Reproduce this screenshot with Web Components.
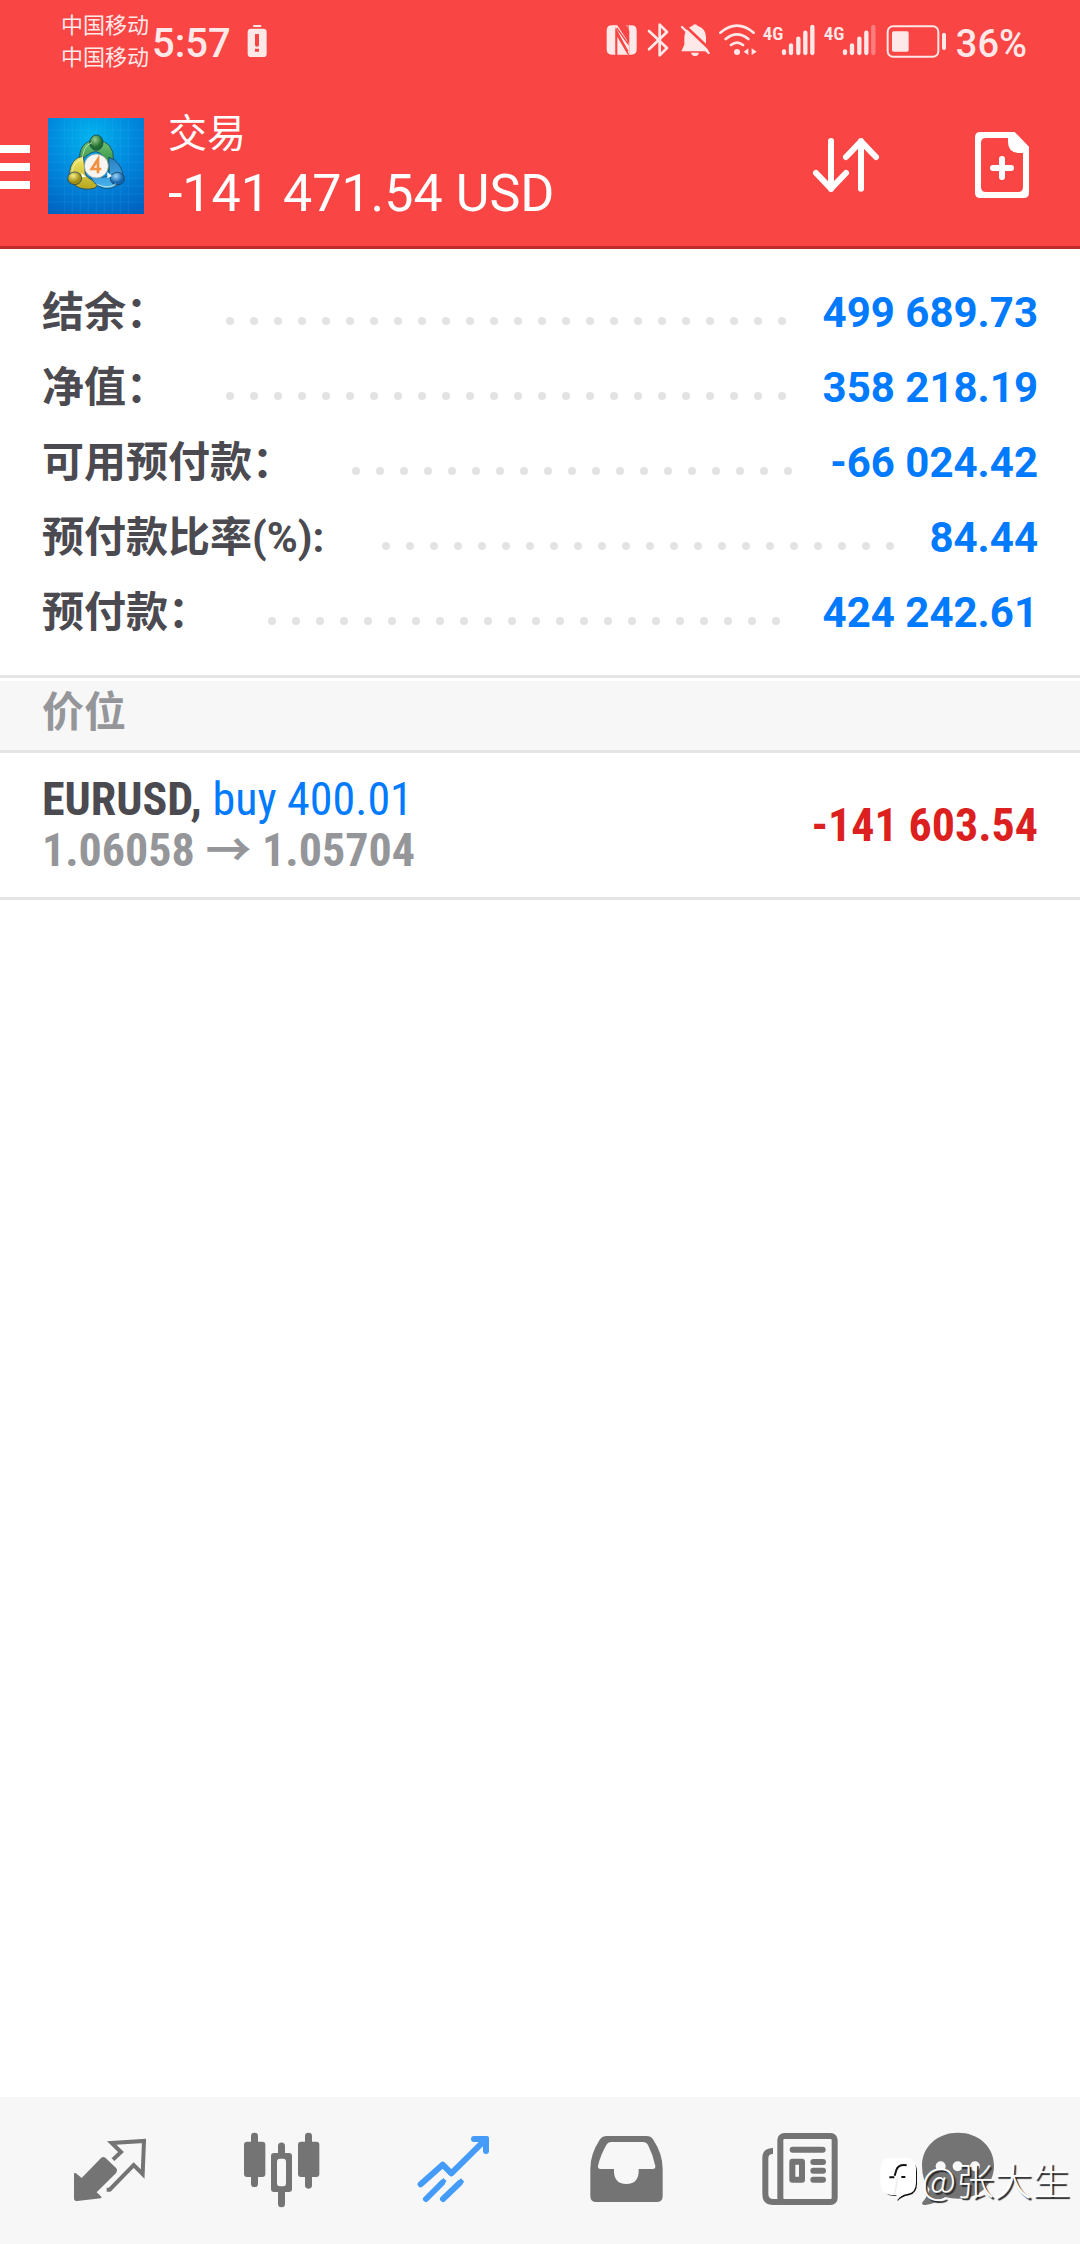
<!DOCTYPE html>
<html lang="zh-CN">
<head>
<meta charset="utf-8">
<meta name="viewport" content="width=device-width, initial-scale=1">
<title>交易</title>
<style>
  :root {
    --red: #fa4545;
    --red-line: #bf2b2b;
    --blue: #007aff;
    --ink: #4b4a50;
    --muted: #95969a;
    --line: #e4e4e4;
    --panel: #f7f7f7;
    --edge: 42px;
    --narrow: "Roboto Condensed", "Liberation Sans Narrow", Roboto, "Noto Sans CJK SC", sans-serif;
  }
  body {
    margin: 0;
    min-height: 100vh;
    display: flex;
    flex-direction: column;
    position: relative;
    background: #fff;
    color: var(--ink);
    font-family: Roboto, "Noto Sans CJK SC", sans-serif;
  }
  main { flex: 1; }
</style>
</head>
<body>
  <status-bar></status-bar>
  <app-header>
    <span slot="title">交易</span>
    <span slot="amount">-141 471.54 USD</span>
  </app-header>
  <main>
    <account-summary>
      <summary-row><span slot="label">结余：</span>499 689.73</summary-row>
      <summary-row><span slot="label">净值：</span>358 218.19</summary-row>
      <summary-row><span slot="label">可用预付款：</span>-66 024.42</summary-row>
      <summary-row><span slot="label">预付款比率(%):</span>84.44</summary-row>
      <summary-row><span slot="label">预付款：</span>424 242.61</summary-row>
    </account-summary>
    <section-title>价位</section-title>
    <position-row>
      <span slot="symbol">EURUSD,</span>
      <span slot="side">buy 400.01</span>
      <span slot="prices">1.06058 → 1.05704</span>
      <span slot="profit">-141 603.54</span>
    </position-row>
  </main>
  <tab-bar></tab-bar>
  <author-mark>@张大生</author-mark>

<script>
class Part extends HTMLElement {
  constructor() {
    super();
    this.attachShadow({ mode: "open" }).innerHTML = this.constructor.markup;
  }
}

customElements.define("signal-bars", class extends Part {
  static markup = `
    <style>
      :host { display: flex; align-items: flex-start; height: 40px; }
      span { width: 18px; margin-left: 2px; font: 600 19px/22px var(--narrow); white-space: nowrap; }
      svg { width: 41px; height: 40px; display: block; }
      :host([weak]) .top { opacity: .35; }
    </style>
    <span>4G</span>
    <svg viewBox="573 69 123 120" stroke="currentColor" stroke-width="13" stroke-linecap="round">
      <path d="M582 154v5M603 136v23M625 116v43M646 98v61"/><path class="top" d="M667 81v78"/>
    </svg>`;
});

customElements.define("status-bar", class extends Part {
  static markup = `
    <style>
      :host { display: flex; align-items: center; justify-content: space-between; height: 86px;
        padding: 0 53px 0 61px; background: var(--red); color: #ffe8e8; }
      div { display: flex; align-items: center; }
      svg { display: block; height: 40px; }
      .carrier { display: block; font-size: 22px; line-height: 32px; padding-bottom: 2px; }
      .carrier span { display: block; }
      time { font-size: 40px; font-weight: 500; line-height: 48px; margin: 0 12px 0 3px; padding-top: 2px; }
      .level { font-size: 38px; font-weight: 500; line-height: 48px; margin-left: 6px; padding-top: 2px; }
    </style>
    <div>
      <div class="carrier"><span>中国移动</span><span>中国移动</span></div>
      <time>5:57</time>
      <svg width="30" viewBox="726 69 90 120" fill="currentColor">
        <rect x="756" y="75" width="25" height="6" rx="2"/>
        <path fill-rule="evenodd" d="M750 86h37q10 0 10 10v65q0 10-10 10h-37q-10 0-10-10v-65q0-10 10-10zM762 102v33q0 5 6 5t6-5v-33zM762 146v9h12v-9z"/>
      </svg>
    </div>
    <div>
      <svg width="32" viewBox="48 69 96 120"><g fill="currentColor">
        <path d="M109 76h15q16 0 16 16v56q0 16-16 16h-6V94z"/>
        <path d="M77 164V76h-11q-16 0-16 16v56q0 16 16 16z"/>
        <path d="M82 110l28 49q3 5 8 5h-36z"/><path d="M74 76h8l36 55v33z"/></g>
        <path d="M78 164V92l36 62M114 76v55L80 84" fill="none" stroke="#fa4545" stroke-width="4"/>
      </svg>
      <svg width="36" viewBox="144 69 108 120" fill="none" stroke="currentColor" stroke-width="8" stroke-linejoin="round" stroke-linecap="round"><path d="M177 93l54 51-22 22V74l22 22-54 52"/></svg>
      <svg width="40" viewBox="252 69 120 120">
        <path d="M306 78q9-10 18 0 24 8 24 34v24l8 18H274l9-20v-22q0-26 23-34z" fill="currentColor"/>
        <path d="M303 158h24q-3 10-12 10t-12-10z" fill="currentColor"/>
        <path d="M282 74l84 80" stroke="#fa4545" stroke-width="8"/>
        <path d="M276 81l80 78" stroke="currentColor" stroke-width="7" stroke-linecap="round"/>
      </svg>
      <svg width="47" viewBox="372 69 141 120" fill="none" stroke="currentColor" stroke-width="8" stroke-linecap="round">
        <path d="M391 98q50-42 100 0M407 117q34-28 68 0M423 135q18-14 36 0"/>
        <circle cx="441" cy="156" r="9" fill="currentColor" stroke="none"/>
        <path d="M475 145v20l-14-10zM485 145v20l15-10z" fill="currentColor" stroke="none"/>
      </svg>
      <signal-bars></signal-bars><signal-bars weak></signal-bars>
      <svg width="67" viewBox="882 69 201 120">
        <rect x="896" y="79" width="152" height="91" rx="16" fill="none" stroke="currentColor" stroke-width="6"/>
        <rect x="909" y="94" width="50" height="61" rx="5" fill="currentColor"/>
        <rect x="1059" y="98" width="12" height="52" rx="6" fill="currentColor"/>
      </svg>
      <span class="level">36%</span>
    </div>`;
});

customElements.define("app-logo", class extends Part {
  static markup = `
    <style>:host, svg { display: block; width: 96px; height: 96px; }</style>
    <svg viewBox="144 350 288 288">
      <defs>
        <radialGradient id="sky" cx=".45" cy=".2" r=".9"><stop offset="0" stop-color="#00b4ee"/><stop offset=".5" stop-color="#0088dd"/><stop offset="1" stop-color="#0062c0"/></radialGradient>
        <linearGradient id="gr" x2="0" y2="1"><stop offset="0" stop-color="#74c274"/><stop offset="1" stop-color="#1d8432"/></linearGradient>
        <linearGradient id="ye" x2="0" y2="1"><stop offset="0" stop-color="#f4ec6b"/><stop offset="1" stop-color="#b7a61e"/></linearGradient>
        <linearGradient id="bl" x2="0" y2="1"><stop offset="0" stop-color="#2b7fc2"/><stop offset="1" stop-color="#48b4f0"/></linearGradient>
        <radialGradient id="hg" cx=".4" cy=".3"><stop offset="0" stop-color="#9bd08c"/><stop offset="1" stop-color="#1f6d2f"/></radialGradient>
        <radialGradient id="hy" cx=".4" cy=".3"><stop offset="0" stop-color="#f6ee86"/><stop offset="1" stop-color="#9e8c14"/></radialGradient>
        <radialGradient id="hb" cx=".4" cy=".3"><stop offset="0" stop-color="#9ad6fa"/><stop offset="1" stop-color="#1666ae"/></radialGradient>
      </defs>
      <path fill="url(#sky)" d="M144 350h288v288H144z"/>
      <path d="M193 350v288M217 350v288M241 350v288M265 350v288M289 350v288M313 350v288M337 350v288M361 350v288M385 350v288M144 386h288M144 410h288M144 434h288M144 458h288M144 482h288M144 506h288M144 530h288M144 554h288M144 578h288M144 602h288" stroke="#5cc4ff" stroke-opacity=".2" stroke-width="2"/>
      <g stroke="#173f58" stroke-width="3" stroke-opacity=".75">
        <path d="M238 484q-3-66 50-68 54 2 53 62-2 24-18 32l-12-44q-22-28-50-4z" fill="url(#gr)"/>
        <path d="M250 464q-38 6-42 54l16 34q26 18 62 8l12-18q-32-4-42-24z" fill="url(#ye)"/>
        <path d="M326 468q40 12 44 62-14 32-54 32-42-8-52-58 28 34 64 20z" fill="url(#bl)"/>
        <ellipse cx="289" cy="424" rx="20" ry="23" fill="url(#hg)"/>
        <ellipse cx="224" cy="531" rx="21" ry="19" fill="url(#hy)"/>
        <ellipse cx="352" cy="532" rx="21" ry="19" fill="url(#hb)"/>
      </g>
      <path d="M246 482q2-50 30-58M216 512q4-30 28-38M290 549q38 16 58-2" fill="none" stroke="#f1fbd8" stroke-opacity=".65" stroke-width="3"/>
      <path d="M244 514l14 12-12 2zM322 512l14 12-14 6z" fill="#fff"/>
      <circle cx="289" cy="494" r="36" fill="#f6f5f2" stroke="#8d9a94" stroke-width="2"/>
      <path d="M294 516V474L275 503H304" fill="none" stroke="#ef9140" stroke-width="8"/>
    </svg>`;
});

customElements.define("app-header", class extends Part {
  static markup = `
    <style>
      :host { display: flex; align-items: center; height: 160px; padding-right: var(--edge);
        background: var(--red); color: #fff; border-bottom: 3px solid var(--red-line); }
      button { display: block; padding: 0; border: 0; background: none; color: inherit; }
      svg { display: block; height: 80px; }
      .menu { margin-right: 18px; }
      .text { flex: 1; display: flex; flex-direction: column; padding: 0 0 4px 24px; line-height: 60px; white-space: nowrap; }
      .title { font-size: 39px; }
      .amount { font-size: 52px; }
      .actions { display: flex; gap: 84px; }
    </style>
    <button class="menu" aria-label="菜单"><svg width="30" viewBox="0 378 90 240" fill="currentColor"><path d="M0 435h90v24H0zM0 489h90v24H0zM0 543h90v24H0z"/></svg></button>
    <app-logo></app-logo>
    <div class="text"><div class="title"><slot name="title"></slot></div><div class="amount"><slot name="amount"></slot></div></div>
    <div class="actions">
      <button aria-label="排序"><svg width="72" viewBox="90 78 216 240" fill="none" stroke="currentColor" stroke-width="18" stroke-linecap="round" stroke-linejoin="round"><path d="M153 123v144M108 219l45 47 45-47M243 266V123M198 171l45-47 45 47"/></svg></button>
      <button aria-label="新订单"><svg width="72" viewBox="558 78 216 240">
        <path fill="currentColor" fill-rule="evenodd" d="M601 96h103l43 44v138q0 16-16 16H601q-16 0-16-16V112q0-16 16-16zM618 114q-15 0-15 15v132q0 15 15 15h96q15 0 15-15V159h-14q-31-2-31-33v-12z"/>
        <path d="M666 177v54M639 204h54" stroke="currentColor" stroke-width="18" stroke-linecap="round"/></svg></button>
    </div>`;
});

customElements.define("account-summary", class extends Part {
  static markup = `
    <style>:host { display: block; padding: 26px var(--edge) 25px; border-bottom: 3px solid var(--line); }</style>
    <slot></slot>`;
});

customElements.define("summary-row", class extends Part {
  static markup = `
    <style>
      :host { display: flex; align-items: center; height: 75px; font-size: 42px; font-weight: 700; line-height: 75px; white-space: nowrap; }
      .value { color: var(--blue); }
      .dots { flex: 1; display: flex; flex-wrap: wrap; height: 24px; overflow: hidden; margin: 16px 16px 0 50px; }
      i { width: 8px; height: 8px; margin: 8px; border-radius: 50%; background: #e3e3e3; }
    </style>
    <span><slot name="label"></slot></span>
    <span class="dots" aria-hidden="true">${"<i></i>".repeat(80)}</span>
    <span class="value"><slot></slot></span>`;
});

customElements.define("section-title", class extends Part {
  static markup = `
    <style>
      :host { display: block; margin-top: 3px; padding: 0 var(--edge) 5px; background: var(--panel); border-bottom: 3px solid var(--line);
        color: var(--muted); font-size: 42px; font-weight: 700; line-height: 64px; }
    </style>
    <slot></slot>`;
});

customElements.define("position-row", class extends Part {
  static markup = `
    <style>
      :host { display: flex; align-items: center; justify-content: space-between; height: 144px; padding: 0 var(--edge);
        border-bottom: 3px solid var(--line); font: 700 46px/51px var(--narrow); white-space: nowrap; }
      .side { color: var(--blue); font-weight: 400; }
      .prices { color: var(--muted); }
      .profit { color: #dc1f1f; }
    </style>
    <div>
      <div><slot name="symbol"></slot> <span class="side"><slot name="side"></slot></span></div>
      <div class="prices"><slot name="prices"></slot></div>
    </div>
    <div class="profit"><slot name="profit"></slot></div>`;
});

customElements.define("tab-bar", class extends Part {
  static markup = `
    <style>
      :host { display: block; background: var(--panel); }
      nav { display: flex; padding: 0 24px; color: #747474; }
      a { flex: 1; display: flex; justify-content: center; color: inherit; }
      a[aria-current] { color: #459cf8; }
      svg { display: block; width: 172px; height: 147px; }
    </style>
    <nav>
      <a href="#quotes" aria-label="行情"><svg viewBox="72 51 516 441">
        <path fill="currentColor" d="M222 280q2-2 6 0l17 14 58-60q7-6 14 0l32 31q5 6 0 13l-59 59 14 13q2 4-2 5l-70 8q-10 2-10-8z"/>
        <path d="M339 239l24-23-28-27 97-6-4 99-27-27-72 74h-9" fill="none" stroke="currentColor" stroke-width="12"/></svg></a>
      <a href="#charts" aria-label="图表"><svg viewBox="588 51 516 441" fill="currentColor">
        <rect x="732" y="185" width="64" height="106" rx="9"/><rect x="753" y="158" width="21" height="163" rx="10"/>
        <rect x="894" y="185" width="64" height="106" rx="9"/><rect x="915" y="158" width="21" height="168" rx="10"/>
        <path fill-rule="evenodd" d="M834 219v-21a10 10 0 0 1 21 0v21h12q9 0 9 9v99q0 9-9 9h-12v35a10 10 0 0 1-21 0v-35h-12q-9 0-9-9v-99q0-9 9-9zM840 236q-9 0-9 9v65q0 9 9 9h10q8 0 8-9v-65q0-9-8-9z"/></svg></a>
      <a href="#trade" aria-label="交易" aria-current="page"><svg viewBox="24 51 516 441" fill="none" stroke="currentColor" stroke-width="18" stroke-linecap="round" stroke-linejoin="round">
        <path d="M182 313l66-59 26 26 100-99M342 177h36v36"/><path d="M360 177h18v18z" fill="currentColor"/>
        <path d="M198 357l48-48M249 357l50-48"/><path d="M243 311l7-7M297 311l6-6" stroke-linecap="square" stroke-width="14"/></svg></a>
      <a href="#history" aria-label="历史"><svg viewBox="540 51 516 441">
        <path fill="currentColor" fill-rule="evenodd" d="M740 168h120q12 0 19 10 29 44 29 88v82q0 18-18 18H709q-18 0-18-18v-82q0-44 29-88 8-10 20-10zM754 186q-10 0-15 9-18 31-25 63-1 9 8 9h40q-2 45 37 45t37-45h42q9 0 8-9-6-32-22-63-5-9-15-9z"/></svg></a>
      <a href="#news" aria-label="新闻"><svg viewBox="-24 51 516 441" fill="none" stroke="currentColor" stroke-width="18">
        <rect x="181" y="168" width="163" height="198" rx="12"/><path d="M159 213q-23 0-23 22v107q0 24 24 24h30" />
        <path d="M218 209h90M280 246h29M280 272h29M280 299h29" stroke-linecap="round"/><path d="M217 245h29v54h-29z" stroke-linejoin="round"/></svg></a>
      <a href="#chat" aria-label="聊天"><svg viewBox="492 51 516 441">
        <path fill="currentColor" d="M714 158c60 0 108 40 108 99s-48 99-108 99q-20 0-38-5-28 20-60 24-12 2-9-8 14-15 22-39-23-28-23-71c0-59 48-99 108-99z"/>
        <g fill="#f7f7f7"><circle cx="662" cy="259" r="15"/><circle cx="713" cy="259" r="15"/><circle cx="765" cy="259" r="15"/></g></svg></a>
    </nav>`;
});

customElements.define("author-mark", class extends Part {
  static markup = `
    <style>
      :host { position: absolute; right: 10px; bottom: 40px; display: flex; align-items: center; gap: 2px; height: 50px;
        color: #fff; font: 300 38px/50px "Noto Sans CJK SC", sans-serif; text-shadow: 2px 2px 1px #222; pointer-events: none; }
      svg { display: block; width: 40px; height: 50px; }
    </style>
    <svg viewBox="468 242 120 150">
      <path d="M508 262h42q32 0 32 34v36q0 28-24 34-24 4-34 18v-16h-14q-28-2-34-34l2-38q0-34 30-34z" fill="#111"/>
      <path d="M504 254h42q33 0 33 34v40q0 30-27 34-20 4-28 18l-4-14h-14q-30-2-34-34v-44q0-34 32-34z" fill="#fff"/>
      <path d="M524 313q-3 26-10 50" fill="none" stroke="#eee" stroke-width="5"/>
      <path d="M551 276q-24-4-31 14l-5 17M499 312h15M535 311h12" fill="none" stroke="#111" stroke-width="6"/>
    </svg>
    <span><slot></slot></span>`;
});
</script>
</body>
</html>
